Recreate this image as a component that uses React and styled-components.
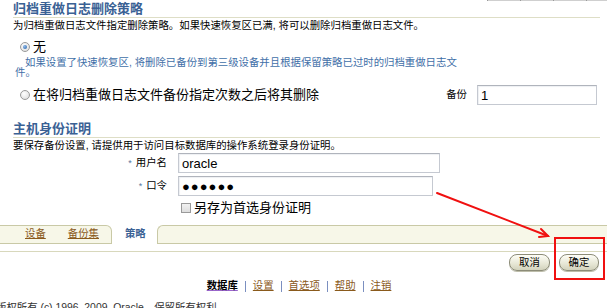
import React from 'react';
import styled, { createGlobalStyle } from 'styled-components';

const GlobalStyle = createGlobalStyle`
  html, body {
    margin: 0;
    padding: 0;
    background: #fff;
  }
  body {
    font-family: "Liberation Sans", "Noto Sans CJK SC", sans-serif;
    color: #000;
    overflow: hidden;
  }
`;

const Page = styled.div`
  position: relative;
  width: 607px;
  height: 308px;
  overflow: hidden;
`;

const TableTail = styled.div`
  display: flex;
  justify-content: flex-end;
  height: 1px;
`;

const TailCell = styled.div`
  width: ${(p) => p.$w}px;
  height: 1px;
  background: #cfcfcf;
  border-left: 1px solid #9a9a9a;
`;

const Content = styled.div`
  padding-left: 13px;
`;

const SectionHeader = styled.div`
  margin-top: ${(p) => p.$top || 0}px;
  margin-right: 7px;
  font-size: 13px;
  font-weight: bold;
  line-height: 16px;
  color: #3a6194;
  border-bottom: 1px solid #dedec6;
`;

const Hint = styled.div`
  margin-top: 2px;
  font-size: 10.4px;
  line-height: 12px;
  white-space: nowrap;
`;

const RadioRow = styled.div`
  display: flex;
  align-items: center;
  height: 20px;
  margin-top: ${(p) => p.$top}px;
  padding-left: 7px;
  padding-right: 10px;
`;

const Radio = styled.span`
  position: relative;
  width: 10px;
  height: 10px;
  flex: none;
  border-radius: 50%;
  box-sizing: border-box;
  border: 1px solid #9a9a9a;
  background: radial-gradient(circle at 40% 35%, #ffffff, #d8d8d8);

  &::after {
    content: '';
    display: ${(p) => (p.$checked ? 'block' : 'none')};
    position: absolute;
    left: 2px;
    top: 2px;
    width: 4px;
    height: 4px;
    border-radius: 50%;
    background: radial-gradient(circle at 35% 35%, #8fb8e8, #1f5fa8);
  }
`;

const OptionLabel = styled.span`
  flex: 1;
  margin-left: 3px;
  font-size: 13px;
  line-height: 16px;
`;

const Tip = styled.div`
  margin-top: 1px;
  padding-left: 2px;
  text-indent: 10px;
  white-space: nowrap;
  font-size: 10.4px;
  line-height: 10px;
  color: #3f6fa8;
`;

const SmallLabel = styled.span`
  font-size: 10.4px;
  line-height: 12px;
  margin-right: 10px;
`;

const TextBox = styled.div`
  box-sizing: border-box;
  width: ${(p) => p.$w}px;
  height: 20px;
  padding: 0 3px;
  display: flex;
  align-items: center;
  border: 1px solid #c5c9d1;
  border-top-color: #b0b4bc;
  box-shadow: inset 1px 1px 1px #eef0f3;
  background: #fff;
  font-size: 13px;
  letter-spacing: ${(p) => (p.$secret ? '1px' : '0')};
`;

const FormRow = styled.div`
  display: flex;
  align-items: center;
  margin-top: ${(p) => p.$top}px;
`;

const FieldLabel = styled.div`
  width: 154px;
  margin-right: 11px;
  text-align: right;
  font-size: 10.4px;
  line-height: 12px;
`;

const Required = styled.span`
  color: #5577a0;
  font-size: 9px;
  margin-right: 4px;
`;

const CheckRow = styled.div`
  display: flex;
  align-items: center;
  height: 16px;
  margin-top: 4px;
  padding-left: 168px;
`;

const CheckBox = styled.span`
  width: 10px;
  height: 10px;
  box-sizing: border-box;
  border: 1px solid #9a9a9a;
  background: linear-gradient(#f2f2f2, #dedede);
  margin-right: 3px;
`;

const CheckLabel = styled.span`
  font-size: 13px;
  line-height: 16px;
`;

const TabBar = styled.div`
  display: flex;
  height: 19px;
  margin-top: 9px;
`;

const Shelf = styled.div`
  display: flex;
  align-items: center;
  gap: 22px;
  box-sizing: border-box;
  background: #f7f7e8;
  border: 1px solid #c9c9a6;
  border-left: none;
  border-top-right-radius: 6px;
  padding: 0 12px 1px 25px;
`;

const RestShelf = styled.div`
  flex: 1;
  box-sizing: border-box;
  background: #f7f7e8;
  border: 1px solid #c9c9a6;
  border-right: none;
  border-top-left-radius: 6px;
`;

const Tab = styled.span`
  font-size: 10.4px;
  line-height: 12px;
  color: ${(p) => (p.$active ? '#3a6194' : '#8a5a1c')};
  font-weight: ${(p) => (p.$active ? 'bold' : 'normal')};
  text-decoration: ${(p) => (p.$active ? 'none' : 'underline')};
`;

const ActiveTab = styled.div`
  display: flex;
  align-items: center;
  box-sizing: border-box;
  width: 45px;
  padding: 0 0 1px 13px;
  background: #fff;
`;

const Rule = styled.div`
  height: 1px;
  margin-top: 7px;
  background: #d8d8bc;
`;

const ButtonRow = styled.div`
  display: flex;
  justify-content: flex-end;
  gap: 9px;
  margin-top: 2px;
  padding-right: 8px;
`;

const Button = styled.button`
  box-sizing: border-box;
  width: ${(p) => p.$w}px;
  height: 17px;
  padding: 0;
  font-family: inherit;
  font-size: 10.4px;
  line-height: 12px;
  color: #000;
  border: 1px solid #8c8c78;
  border-radius: 8px;
  background: linear-gradient(#fdfdf6, #e6e6d4 60%, #d2d2bc);
  box-shadow: 0 1px 0 #bdbdaa;
`;

const FooterLinks = styled.div`
  display: flex;
  justify-content: center;
  align-items: center;
  gap: 7px;
  margin-top: 9px;
  padding-right: 9px;
  height: 12px;
`;

const FooterLink = styled.span`
  font-size: 10.4px;
  line-height: 12px;
  color: ${(p) => (p.$current ? '#000' : '#8a5a1c')};
  font-weight: ${(p) => (p.$current ? 'bold' : 'normal')};
  text-decoration: underline;
  text-decoration-color: ${(p) => (p.$current ? '#9a66cc' : '#8a5a1c')};
`;

const Separator = styled.span`
  width: 1px;
  height: 11px;
  background: #7b8fc0;
`;

const Copyright = styled.div`
  margin-top: 10px;
  margin-left: -4px;
  font-size: 10.4px;
  line-height: 12px;
  color: #333;
  white-space: nowrap;
`;

const HighlightBox = styled.div`
  position: absolute;
  left: 554px;
  top: 237px;
  width: 51px;
  height: 43px;
  box-sizing: border-box;
  border: 2px solid #f01010;
`;

const Overlay = styled.svg`
  position: absolute;
  left: 0;
  top: 0;
  pointer-events: none;
`;

const links = ['设置', '首选项', '帮助', '注销'];

export default function App() {
  return (
    <Page>
      <GlobalStyle />
      <TableTail>
        <TailCell $w={32} />
        <TailCell $w={32} />
        <TailCell $w={32} />
        <TailCell $w={20} />
      </TableTail>

      <Content>
        <SectionHeader>归档重做日志删除策略</SectionHeader>
        <Hint>为归档重做日志文件指定删除策略。如果快速恢复区已满, 将可以删除归档重做日志文件。</Hint>

        <RadioRow $top={5}>
          <Radio $checked />
          <OptionLabel>无</OptionLabel>
        </RadioRow>
        <Tip>
          如果设置了快速恢复区, 将删除已备份到第三级设备并且根据保留策略已过时的归档重做日志文<br />件。
        </Tip>
        <RadioRow $top={7}>
          <Radio />
          <OptionLabel>在将归档重做日志文件备份指定次数之后将其删除</OptionLabel>
          <SmallLabel>备份</SmallLabel>
          <TextBox $w={120}>1</TextBox>
        </RadioRow>

        <SectionHeader $top={16}>主机身份证明</SectionHeader>
        <Hint>要保存备份设置, 请提供用于访问目标数据库的操作系统登录身份证明。</Hint>

        <FormRow $top={1}>
          <FieldLabel><Required>*</Required>用户名</FieldLabel>
          <TextBox $w={262}>oracle</TextBox>
        </FormRow>
        <FormRow $top={3}>
          <FieldLabel><Required>*</Required>口令</FieldLabel>
          <TextBox $w={255} $secret>●●●●●●</TextBox>
        </FormRow>
        <CheckRow>
          <CheckBox />
          <CheckLabel>另存为首选身份证明</CheckLabel>
        </CheckRow>
      </Content>

      <TabBar>
        <Shelf>
          <Tab>设备</Tab>
          <Tab>备份集</Tab>
        </Shelf>
        <ActiveTab>
          <Tab $active>策略</Tab>
        </ActiveTab>
        <RestShelf />
      </TabBar>
      <Rule />

      <ButtonRow>
        <Button $w={41}>取消</Button>
        <Button $w={40}>确定</Button>
      </ButtonRow>

      <FooterLinks>
        <FooterLink $current>数据库</FooterLink>
        {links.map((l) => (
          <React.Fragment key={l}>
            <Separator />
            <FooterLink>{l}</FooterLink>
          </React.Fragment>
        ))}
      </FooterLinks>
      <Copyright>版权所有 (c) 1996, 2009, Oracle。保留所有权利。</Copyright>

      <HighlightBox />
      <Overlay width="607" height="308">
        <g stroke="#f01010" strokeWidth="2" fill="none" strokeLinecap="round">
          <line x1="437" y1="193" x2="548" y2="236" />
          <polyline points="541,229 548,236 539,237" />
        </g>
      </Overlay>
    </Page>
  );
}
